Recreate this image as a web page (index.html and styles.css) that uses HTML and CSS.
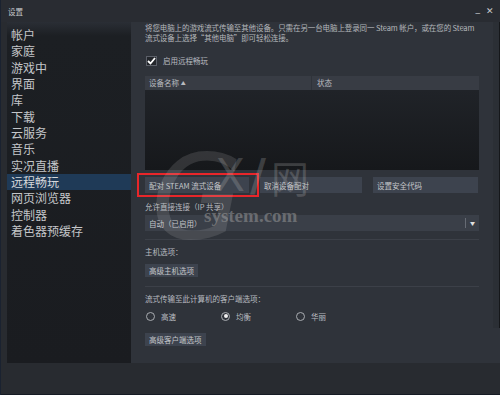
FILE: index.html
```html
<!DOCTYPE html>
<html lang="zh-CN">
<head>
    <meta charset="UTF-8">
    <title>设置</title>
    <link rel="stylesheet" href="styles.css">
</head>
<body>
    <div class="window">
        <div class="titlebar">
            <span class="title">设置</span>
            <span class="win-buttons"><span class="min">_</span><span class="close">✕</span></span>
        </div>

        <div class="main">
            <ul class="nav">
                <li>帐户</li>
                <li>家庭</li>
                <li>游戏中</li>
                <li>界面</li>
                <li>库</li>
                <li>下载</li>
                <li>云服务</li>
                <li>音乐</li>
                <li>实况直播</li>
                <li class="selected">远程畅玩</li>
                <li>网页浏览器</li>
                <li>控制器</li>
                <li>着色器预缓存</li>
            </ul>

            <div class="content">
                <div class="pane">
                    <p class="desc">将您电脑上的游戏流式传输至其他设备。只需在另一台电脑上登录同一 Steam 帐户，或在您的 Steam<br>流式设备上选择“其他电脑”即可轻松连接。</p>

                    <label class="check-row">
                        <span class="checkbox">
                            <svg width="9" height="8" viewBox="0 0 9 8"><path d="M1 4 L3.5 6.5 L8 1" fill="none" stroke="#fff" stroke-width="1.8"/></svg>
                        </span>
                        启用远程畅玩
                    </label>

                    <div class="table">
                        <div class="table-head">
                            <span class="col-name">设备名称 <span class="sort">▲</span></span>
                            <span class="col-state">状态</span>
                        </div>
                        <div class="table-body"></div>
                    </div>

                    <div class="button-row">
                        <button class="btn">配对 STEAM 流式设备</button>
                        <button class="btn">取消设备配对</button>
                        <button class="btn">设置安全代码</button>
                        <span class="highlight"></span>
                    </div>

                    <p class="label direct">允许直接连接（IP 共享）</p>
                    <div class="dropdown">
                        <span>自动（已启用）</span>
                        <span class="drop-arrow">▼</span>
                    </div>

                    <hr class="sep sep-first">

                    <p class="label">主机选项：</p>
                    <button class="btn small">高级主机选项</button>

                    <hr class="sep">

                    <p class="label">流式传输至此计算机的客户端选项：</p>
                    <div class="radios">
                        <label class="radio"><span class="circle"></span>高速</label>
                        <label class="radio"><span class="circle on"></span>均衡</label>
                        <label class="radio"><span class="circle"></span>华丽</label>
                    </div>
                    <button class="btn small client">高级客户端选项</button>
                </div>
                <div class="scrollbar"></div>
            </div>
        </div>

        <div class="footer"></div>

        <!-- watermark of the source site -->
        <div class="watermark">
            <span class="wm-g">G</span>
            <span class="wm-x">X</span>
            <span class="wm-slash">/</span>
            <span class="wm-net">网</span>
            <span class="wm-site">system.com</span>
        </div>
    </div>
</body>
</html>
```

FILE: styles.css
```css
body {
    margin: 0;
    width: 500px;
    height: 395px;
    overflow: hidden;
    background-color: #282b30;
    font-family: "Noto Sans CJK SC", "Noto Sans", sans-serif;
    color: #b8bbc0;
}

.window {
    position: relative;
    display: flex;
    flex-direction: column;
    height: 395px;
    border-left: 1px solid #1a2230;
    box-sizing: border-box;
}

/* Title bar */
.titlebar {
    height: 22px;
    display: flex;
    align-items: center;
    justify-content: space-between;
    padding: 0 6px 0 7px;
    background-color: #292c32;
    font-size: 7.5px;
    color: #c8cacd;
}

.win-buttons {
    display: flex;
    gap: 6px;
    font-size: 9px;
    color: #c8cacd;
    margin-top: -2px;
}

.win-buttons .min {
    font-family: "DejaVu Sans", sans-serif;
}

/* Main area */
.main {
    display: flex;
    height: 341px;
    padding-left: 6px;
}

.nav {
    list-style: none;
    margin: 0;
    padding: 5px 0 0 0;
    width: 124px;
    background: linear-gradient(#2a2e35 0px, #1c1f23 14px, #1a1c20 100%);
}

.nav li {
    height: 16.33px;
    line-height: 16.33px;
    padding-left: 4px;
    font-size: 12px;
    color: #c4c6c9;
}

.nav li.selected {
    background-color: #1f3a57;
    color: #d6d8db;
}

.content {
    flex: 1;
    display: flex;
    background-color: #2f333a;
}

.pane {
    position: relative;
    width: 334px;
    padding-left: 14px;
    font-size: 7.5px;
}

.scrollbar {
    width: 6px;
    height: 306px;
    margin-left: 14px;
    background-color: #2b2f35;
    border-right: 1px solid #15171a;
}

.desc {
    margin: 1px 0 0 0;
    line-height: 10px;
    white-space: nowrap;
    letter-spacing: -0.1px;
    color: #b4b7bb;
}

/* Checkbox */
.check-row {
    display: flex;
    align-items: center;
    gap: 6px;
    margin-top: 12px;
    height: 11px;
    padding-left: 1px;
    color: #b8bbc0;
}

.checkbox {
    width: 9px;
    height: 8px;
    display: flex;
    align-items: center;
    justify-content: center;
    background-color: #23262b;
    border: 1px solid #5c6069;
}

/* Device table */
.table {
    margin-top: 10px;
}

.table-head {
    display: flex;
    height: 14px;
    line-height: 14px;
    background-color: #383c44;
}

.col-name {
    width: 162px;
    padding-left: 4px;
    border-right: 1px solid #2f333a;
}

.col-state {
    padding-left: 5px;
}

.sort {
    font-size: 5px;
    vertical-align: 1px;
}

.table-body {
    height: 80px;
    background: linear-gradient(#202328, #16181b);
}

/* Buttons */
.button-row {
    position: relative;
    display: grid;
    grid-template-columns: 104px 102px 105px;
    gap: 11px;
    margin-top: 7px;
}

.btn {
    height: 16px;
    padding: 0 4px;
    border: none;
    background-color: #3d434e;
    color: #c4c6ca;
    font-family: inherit;
    font-size: 7.5px;
    text-align: left;
}

.btn.small {
    display: block;
    height: 13px;
    margin-top: 7px;
}

.btn.client {
    margin-top: 11px;
}

.highlight {
    position: absolute;
    left: -8px;
    top: -4px;
    width: 118px;
    height: 20px;
    border: 2px solid #e8262a;
}

.label {
    margin: 7px 0 0 0;
    line-height: 10px;
}

.label.direct {
    margin-top: 9px;
}

/* Dropdown */
.dropdown {
    display: flex;
    justify-content: space-between;
    align-items: center;
    height: 16px;
    margin-top: 3px;
    padding-left: 4px;
    background-color: #3a3f48;
    color: #c4c6ca;
}

.drop-arrow {
    width: 13px;
    height: 10px;
    line-height: 10px;
    border-left: 1px solid #666b74;
    text-align: center;
    font-size: 5px;
    color: #e0e0e0;
}

.sep {
    margin: 9px 0 0 0;
    border: none;
    height: 1px;
    background-color: #3c4048;
}

.sep-first {
    margin-top: 8px;
}

/* Radio buttons */
.radios {
    display: flex;
    height: 12px;
    margin-top: 6px;
    padding-left: 1px;
}

.radio {
    display: flex;
    align-items: center;
    gap: 6px;
    width: 75px;
}

.circle {
    width: 7px;
    height: 7px;
    border: 1.5px solid #a9acb1;
    border-radius: 50%;
    display: flex;
    align-items: center;
    justify-content: center;
}

.circle.on::after {
    content: "";
    width: 4px;
    height: 4px;
    border-radius: 50%;
    background-color: #f0f0f0;
}

.footer {
    flex: 1;
    background-color: #282b30;
    border-bottom: 1px solid #161b24;
}

/* Watermark */
.watermark {
    position: absolute;
    left: 0;
    top: 0;
    width: 500px;
    height: 395px;
    pointer-events: none;
    color: rgba(210, 210, 210, 0.28);
}

.watermark span {
    position: absolute;
}

.wm-g {
    left: 150px;
    top: 128px;
    font-family: "DejaVu Sans", sans-serif;
    font-size: 118px;
    font-style: italic;
    color: rgba(200, 200, 200, 0.16);
}

.wm-x {
    left: 214px;
    top: 150px;
    font-family: "DejaVu Sans", sans-serif;
    font-size: 44px;
    color: rgba(200, 200, 200, 0.22);
}

.wm-slash {
    left: 249px;
    top: 150px;
    font-family: "DejaVu Sans", sans-serif;
    font-size: 44px;
    font-weight: bold;
    color: rgba(200, 200, 200, 0.22);
}

.wm-net {
    left: 270px;
    top: 152px;
    font-family: "Noto Sans CJK SC", sans-serif;
    font-size: 38px;
    line-height: 50px;
    color: rgba(200, 200, 200, 0.22);
}

.wm-site {
    left: 203px;
    top: 205px;
    font-family: "Liberation Serif", serif;
    font-size: 19px;
    font-weight: bold;
    color: rgba(170, 170, 170, 0.45);
}
```
